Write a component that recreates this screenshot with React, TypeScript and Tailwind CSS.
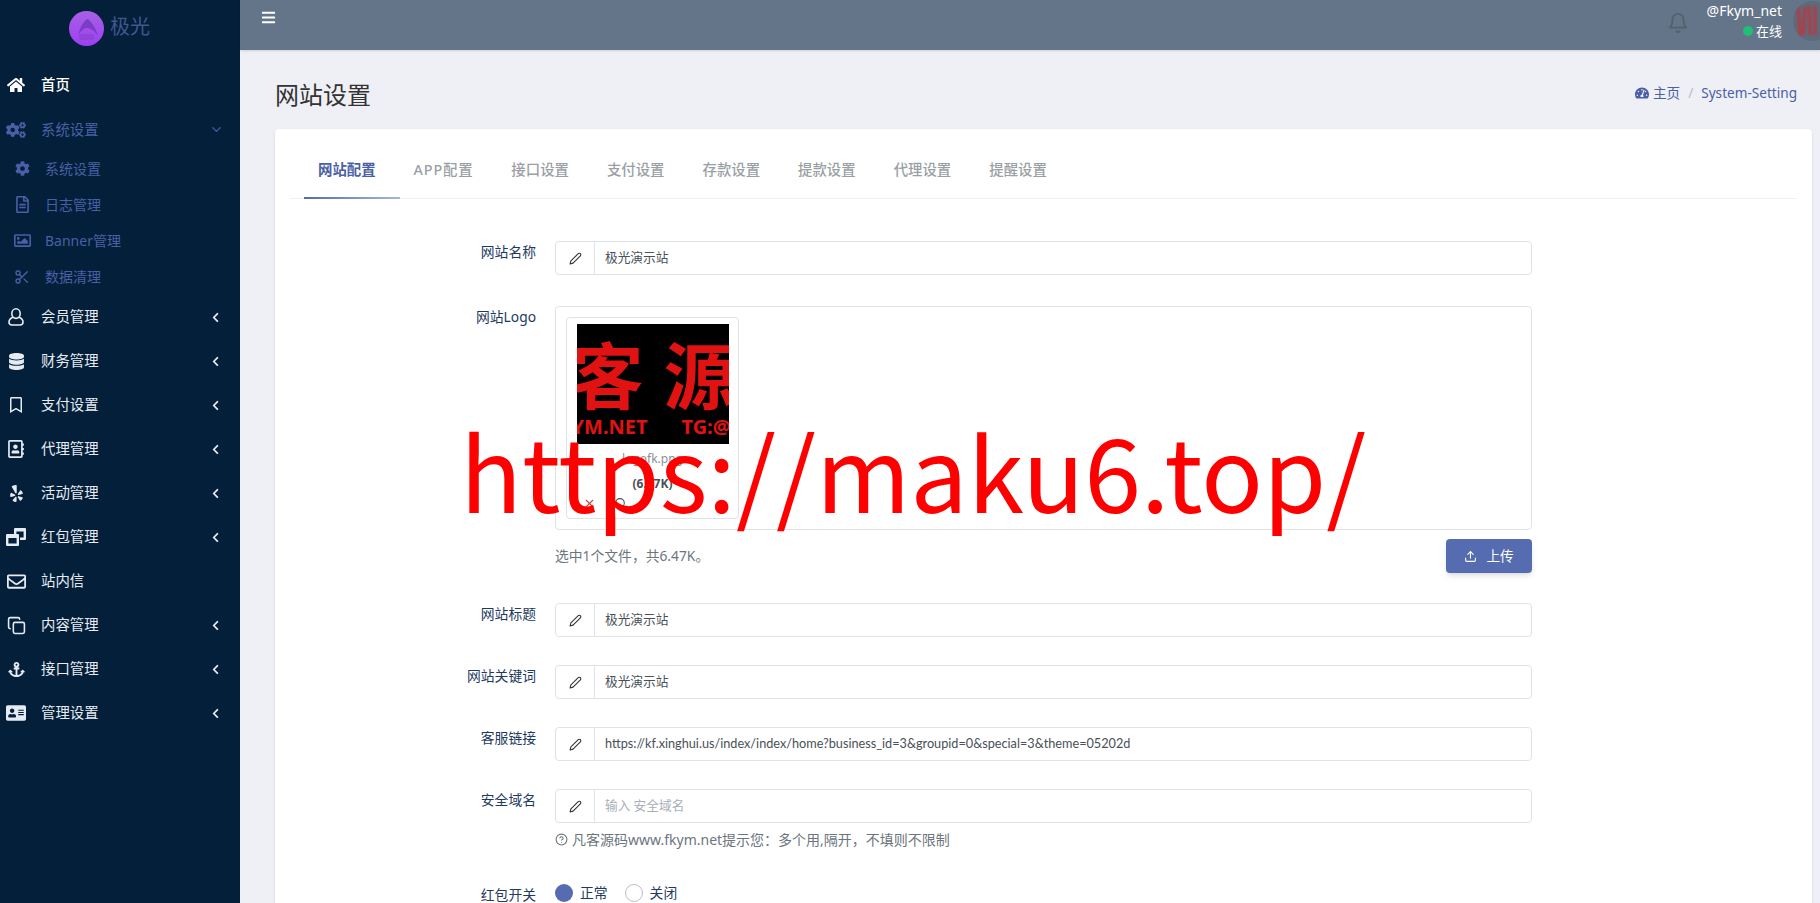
import type { ReactNode } from 'react'
import {
  FaAddressCard,
  FaAnchor,
  FaBars,
  FaChevronLeft,
  FaCog,
  FaCogs,
  FaDatabase,
  FaHome,
  FaRegAddressBook,
  FaRegBookmark,
  FaRegEnvelope,
  FaRegFileAlt,
  FaRegImage,
  FaTachometerAlt,
  FaYelp,
} from 'react-icons/fa'
import { FiBell, FiChevronDown, FiEdit2, FiHelpCircle, FiSearch, FiUpload, FiX } from 'react-icons/fi'
import { LuCopy, LuScissors } from 'react-icons/lu'

function UserIcon() {
  return (
    <svg width="16" height="18" viewBox="0 0 16 18" fill="none" stroke="currentColor" strokeWidth="1.6">
      <ellipse cx="8" cy="5.6" rx="4.2" ry="4.8" />
      <path d="M5 9.2 C2.5 10.2 1 12 1 14 C1 16 2.2 17 4 17 H12 C13.8 17 15 16 15 14 C15 12 13.5 10.2 11 9.2" />
    </svg>
  )
}

function PacketIcon() {
  return (
    <svg width="20" height="18" viewBox="0 0 20 18" fill="currentColor" fillRule="evenodd">
      <path d="M8 1 Q8 0 9 0 H19 Q20 0 20 1 V11 Q20 12 19 12 H14 V9.5 H17.6 V3.5 H10.4 V6 H8 Z" />
      <path d="M1 6 H12 Q13 6 13 7 V17 Q13 18 12 18 H1 Q0 18 0 17 V7 Q0 6 1 6 Z M2.4 10 V15.6 H10.6 V10 Z" />
    </svg>
  )
}

const subMenu = [
  { icon: <FaCog className="text-[15px]" />, label: '系统设置' },
  { icon: <FaRegFileAlt className="text-[17px]" />, label: '日志管理' },
  { icon: <FaRegImage className="text-[17px]" />, label: 'Banner管理' },
  { icon: <LuScissors className="text-[16px]" />, label: '数据清理' },
]

const mainMenu = [
  { icon: <UserIcon />, label: '会员管理', arrow: true },
  { icon: <FaDatabase className="text-[17px]" />, label: '财务管理', arrow: true },
  { icon: <FaRegBookmark className="text-[16px]" />, label: '支付设置', arrow: true },
  { icon: <FaRegAddressBook className="text-[18px]" />, label: '代理管理', arrow: true },
  { icon: <FaYelp className="text-[17px]" />, label: '活动管理', arrow: true },
  { icon: <PacketIcon />, label: '红包管理', arrow: true },
  { icon: <FaRegEnvelope className="text-[19px]" />, label: '站内信', arrow: false },
  { icon: <LuCopy className="text-[19px]" />, label: '内容管理', arrow: true },
  { icon: <FaAnchor className="text-[17px]" />, label: '接口管理', arrow: true },
  { icon: <FaAddressCard className="text-[20px]" />, label: '管理设置', arrow: true },
]

const tabs = ['网站配置', 'APP配置', '接口设置', '支付设置', '存款设置', '提款设置', '代理设置', '提醒设置']

function Sidebar() {
  return (
    <aside className="w-[240px] shrink-0 bg-[#031f3a] text-[14.4px] text-[#e6ebf1]">
      <div className="flex h-[63px] items-start justify-center pt-[11px] pr-[21px]">
        <svg width="35" height="35" viewBox="0 0 35 35" className="shrink-0">
          <defs>
            <linearGradient id="logoFill" x1="0" y1="0" x2="0" y2="1">
              <stop offset="0" stopColor="#a860e6" />
              <stop offset="1" stopColor="#9c40f2" />
            </linearGradient>
          </defs>
          <circle cx="17.5" cy="17.5" r="17.5" fill="url(#logoFill)" />
          <path d="M9 24 C12 15 15 9 19 8 C23 12 27 17 29 25 C25 19 21 17 17 17 C14 18 11 21 9 24 Z" fill="#7d3cc4" />
          <rect x="10" y="23" width="15" height="6" rx="2" fill="#8f45d8" />
        </svg>
        <span className="ml-[6px] text-[20px] leading-[32px] text-[#42568f]">极光</span>
      </div>

      <div className="flex h-[44px] items-center pl-[7px]">
        <span className="flex w-[18px] justify-center text-[18px] text-white"><FaHome /></span>
        <span className="ml-[16px] font-medium text-white">首页</span>
      </div>

      <div className="flex h-[44px] items-center pl-[6px] pr-[16px] pt-[1px] text-[#4a5fa5]">
        <span className="flex w-[20px] justify-center text-[20px]"><FaCogs /></span>
        <span className="ml-[15px]">系统设置</span>
        <FiChevronDown className="ml-auto text-[15px]" />
      </div>

      {subMenu.map((item) => (
        <div key={item.label} className="flex h-[36px] items-center pb-[1px] pl-[13px] text-[14px] text-[#4a5fa5]">
          <span className="flex w-[18px] justify-center">{item.icon}</span>
          <span className="ml-[14px]">{item.label}</span>
        </div>
      ))}

      {mainMenu.map((item) => (
        <div key={item.label} className="flex h-[44px] items-center pl-[6px] pr-[19px]">
          <span className="flex w-[20px] justify-center">{item.icon}</span>
          <span className="ml-[15px]">{item.label}</span>
          {item.arrow && <FaChevronLeft className="ml-auto text-[11px]" />}
        </div>
      ))}
    </aside>
  )
}

function Header() {
  return (
    <header className="flex h-[50px] shrink-0 items-start overflow-hidden bg-[#64758a] pl-[21px] shadow-sm">
      <FaBars className="mt-[10px] text-[15px] text-white" />
      <div className="ml-auto flex items-start">
        <FiBell className="mt-[12px] mr-[18px] text-[22px] text-[#55606c]" />
        <div className="mr-[11px] flex flex-col items-end pt-[1px] text-[14px] leading-[20px] text-white">
          <span>@Fkym_net</span>
          <span className="flex items-center text-[13px]">
            <span className="mr-[3px] h-[10px] w-[10px] rounded-full bg-[#1fbf75]" />
            在线
          </span>
        </div>
        <div className="-mr-[13px] mt-[1px] h-[40px] w-[40px] shrink-0 overflow-hidden rounded-full bg-[#5d6b7c]">
          <svg width="40" height="40" viewBox="0 0 40 40" className="blur-[1px]">
            <path d="M5 5 L7 34 M12 6 L10 34 M16 5 L17 34 M22 5 L22 34" stroke="#b53a42" strokeWidth="3" />
          </svg>
        </div>
      </div>
    </header>
  )
}

function FormRow({ label, children, className }: { label: string; children: ReactNode; className: string }) {
  return (
    <div className={`flex items-start ${className}`}>
      <label className="w-[247px] shrink-0 pr-px text-right text-[13.8px] leading-[21px] text-[#1e3a5f]">{label}</label>
      <div className="ml-[18px] w-[977px]">{children}</div>
    </div>
  )
}

function TextInput({ value, placeholder }: { value?: string; placeholder?: string }) {
  return (
    <div className="flex h-[34px] items-stretch rounded border border-[#dfe3e8] bg-white">
      <span className="flex w-[39px] items-center justify-center border-r border-[#dfe3e8] text-[13px] text-[#333]">
        <FiEdit2 />
      </span>
      <span
        className={`flex items-center pl-[10px] text-[12.7px] ${value ? 'text-[#495057]' : 'text-[#a9afb6]'}`}
        style={{ fontFamily: 'Lato, "Noto Sans CJK SC", sans-serif' }}
      >
        {value ?? placeholder}
      </span>
    </div>
  )
}

function LogoPreview() {
  return (
    <div className="relative h-[120px] w-[152px] shrink-0 overflow-hidden bg-black font-bold text-[#e01212]">
      <span className="absolute left-[-5px] top-[3px] text-[72px] leading-[96px]">客</span>
      <span className="absolute left-[87px] top-[3px] text-[72px] leading-[96px]">源</span>
      <span className="absolute left-[-5px] top-[90px] text-[20px] leading-[26px]">YM.NET</span>
      <span className="absolute left-[105px] top-[90px] whitespace-nowrap text-[20px] leading-[26px]">TG:@</span>
    </div>
  )
}

function Form() {
  return (
    <div className="pt-[42px]">
      <FormRow label="网站名称" className="mb-[31px]">
        <TextInput value="极光演示站" />
      </FormRow>

      <FormRow label="网站Logo" className="mb-[30px]">
        <div className="h-[224px] rounded border border-[#dfe3e8] pl-[10px] pt-[10px]">
          <div className="flex h-[202px] w-[173px] flex-col items-center rounded-sm border border-[#dfe3e8] pt-[6px]">
            <LogoPreview />
            <span className="mt-[6px] text-[12px] leading-[18px] text-[#8a9199]">logofk.png</span>
            <span className="mt-[7px] text-[12px] font-bold leading-[18px] text-[#495057]">(6.47K)</span>
            <div className="mt-[4px] flex w-full gap-[18px] pl-[16px] text-[13px]">
              <FiX className="text-[#c9433f]" />
              <FiSearch className="text-[#495057]" />
            </div>
          </div>
        </div>
        <div className="mt-[9px] flex items-start justify-between">
          <span className="mt-[7px] text-[13.8px] leading-[20px] text-[#6c757d]">选中1个文件，共6.47K。</span>
          <button className="flex h-[34px] w-[86px] items-center justify-center rounded bg-[#566cb0] text-[13.6px] text-white shadow-md">
            <FiUpload className="mr-[9px] text-[13px]" />
            上传
          </button>
        </div>
      </FormRow>

      <FormRow label="网站标题" className="mb-[28px]">
        <TextInput value="极光演示站" />
      </FormRow>
      <FormRow label="网站关键词" className="mb-[28px]">
        <TextInput value="极光演示站" />
      </FormRow>
      <FormRow label="客服链接" className="mb-[28px]">
        <TextInput value="https://kf.xinghui.us/index/index/home?business_id=3&groupid=0&special=3&theme=05202d" />
      </FormRow>
      <FormRow label="安全域名" className="mb-[35px]">
        <TextInput placeholder="输入 安全域名" />
        <div className="mt-[6px] flex h-[20px] items-center text-[14px] text-[#6c757d]">
          <FiHelpCircle className="mr-[4px] text-[13px]" />
          凡客源码www.fkym.net提示您：多个用,隔开，不填则不限制
        </div>
      </FormRow>

      <FormRow label="红包开关" className="">
        <div className="flex items-center text-[13.8px] leading-[18px] text-[#1e3a5f]">
          <span className="h-[18px] w-[18px] rounded-full bg-[#566cb0]" />
          <span className="ml-[7px]">正常</span>
          <span className="ml-[17px] h-[18px] w-[18px] rounded-full border border-[#b8c0c9]" />
          <span className="ml-[7px]">关闭</span>
        </div>
      </FormRow>
    </div>
  )
}

export default function App() {
  return (
    <div
      className="relative flex h-[903px] w-[1820px] overflow-hidden bg-[#eff0f6]"
      style={{ fontFamily: '"Noto Sans", "Noto Sans CJK SC", sans-serif' }}
    >
      <Sidebar />
      <main className="flex min-w-0 flex-1 flex-col">
        <Header />
        <div className="flex h-[79px] shrink-0 items-center justify-between pl-[35px] pr-[23px] pt-[11px]">
          <h1 className="text-[24px] font-normal text-[#333]">网站设置</h1>
          <div className="mb-[4px] flex items-center text-[13.6px] text-[#4a5fa5]">
            <FaTachometerAlt className="mr-[4px] text-[14px]" />
            主页
            <span className="mx-[8px] text-[#b4bcc8]">/</span>
            System-Setting
          </div>
        </div>
        <section className="ml-[35px] mr-[8px] flex-1 rounded-t bg-white px-[15px] shadow-sm">
          <div className="flex h-[70px] border-b border-[#eef0f3] pl-[14px]">
            {tabs.map((tab, index) => (
              <div
                key={tab}
                className={`relative pl-[14px] pr-[24px] pt-[29px] text-[14.4px] font-medium leading-[24px] ${
                  index === 0 ? 'font-semibold text-[#4a5fa5]' : 'text-[#9a9fa5]'
                } ${index === 1 ? 'tracking-[0.8px]' : ''}`}
              >
                {tab}
                {index === 0 && (
                  <span className="absolute bottom-[-1px] left-0 h-[2px] w-[96px] bg-gradient-to-r from-[#566cb0] to-[#aab5d8]" />
                )}
              </div>
            ))}
          </div>
          <Form />
        </section>
      </main>

      {/* watermark over the page */}
      <div
        className="pointer-events-none absolute left-[460px] top-[394px] whitespace-nowrap text-[102px] leading-[150px] text-[#ff0000]"
        style={{ fontFamily: '"Noto Sans CJK SC", sans-serif' }}
      >
        https://maku6.top/
      </div>
    </div>
  )
}
